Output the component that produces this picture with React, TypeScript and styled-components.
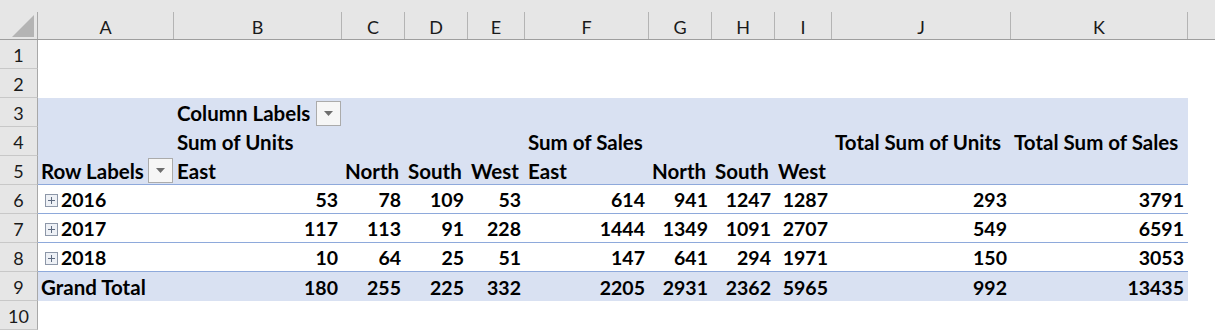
import React from "react";
import styled, { createGlobalStyle } from "styled-components";

const Global = createGlobalStyle`
  html, body { margin: 0; padding: 0; background: #ffffff; }
  body { font-family: Lato, "Open Sans", "Liberation Sans", sans-serif; overflow: hidden; }
`;

const COLS = "38px 136px 168px 63px 63px 57px 124px 63px 63px 57px 179px 177px 1fr";
const FILL = "#d9e1f2";
const LINE = "#8ea9db";

const Sheet = styled.div`
  width: 1215px;
  height: 330px;
  display: flex;
  flex-direction: column;
  overflow: hidden;
`;

const HeaderRow = styled.div`
  display: grid;
  grid-template-columns: ${COLS};
  height: 41px;
  box-sizing: border-box;
  background: #e6e6e6;
  border-bottom: 1px solid #9e9e9e;
`;

const Corner = styled.div`
  box-sizing: border-box;
  border-right: 1px solid #a8a8a8;
  margin-top: 12px;
  display: flex;
  align-items: flex-end;
  justify-content: flex-end;
  padding: 0 3px 2px 0;
`;

const ColHead = styled.div<{ $last?: boolean }>`
  box-sizing: border-box;
  margin-top: 12px;
  border-right: ${(p) => (p.$last ? "none" : "1px solid #b4b4b4")};
  display: flex;
  align-items: center;
  justify-content: center;
  font-size: 18px;
  color: #1a1a1a;
  padding-top: 2px;
`;

const Row = styled.div`
  display: grid;
  grid-template-columns: ${COLS};
  height: 29px;
  flex: none;
`;

const RowNum = styled.div`
  box-sizing: border-box;
  background: #e6e6e6;
  border-right: 1px solid #a8a8a8;
  border-bottom: 1px solid #c8c8c8;
  display: flex;
  align-items: center;
  justify-content: center;
  font-size: 18px;
  color: #1a1a1a;
  padding-top: 1px;
`;

const Cell = styled.div<{ $fill?: boolean; $line?: boolean; $right?: boolean }>`
  box-sizing: border-box;
  background: ${(p) => (p.$fill ? FILL : "#ffffff")};
  border-bottom: ${(p) => (p.$line ? `1px solid ${LINE}` : "none")};
  display: flex;
  align-items: center;
  justify-content: ${(p) => (p.$right ? "flex-end" : "space-between")};
  padding: 1px ${(p) => (p.$right ? "4px" : "1px")} 0 3px;
  font-size: ${(p) => (p.$right ? "19.5px" : "20.5px")};
  font-weight: 700;
  color: #000000;
  white-space: nowrap;
  overflow: visible;
  min-width: 0;
`;

const Label = styled.span`
  display: inline-flex;
  align-items: center;
  gap: 3px;
  font-size: 19.5px;
`;

const DropButton = styled.span`
  box-sizing: border-box;
  width: 25px;
  height: 25px;
  border: 1px solid #ababab;
  background: #f6f6f6;
  display: inline-flex;
  align-items: center;
  justify-content: center;
  flex: none;
`;

const Plus = styled.svg`
  flex: none;
  margin-left: 4px;
  margin-top: 1px;
`;

const Dropdown = () => (
  <DropButton>
    <svg width="9" height="5" viewBox="0 0 9 5">
      <path d="M0 0 H9 L4.5 5 Z" fill="#6e6e6e" />
    </svg>
  </DropButton>
);

const PlusBox = () => (
  <Plus width="13" height="13" viewBox="0 0 13 13">
    <rect x="0.5" y="0.5" width="12" height="12" fill="#eef1f6" stroke="#8d97a8" />
    <path d="M3 6.5 H10 M6.5 3 V10" stroke="#5f6b80" strokeWidth="1" />
  </Plus>
);

const CornerTriangle = () => (
  <svg width="22" height="22" viewBox="0 0 22 22">
    <path d="M22 0 V22 H0 Z" fill="#b4b4b4" />
  </svg>
);

const letters = ["A", "B", "C", "D", "E", "F", "G", "H", "I", "J", "K", ""];

type DataRow = {
  label: string;
  units: number[];
  sales: number[];
  tu: number;
  ts: number;
};

const data: DataRow[] = [
  { label: "2016", units: [53, 78, 109, 53], sales: [614, 941, 1247, 1287], tu: 293, ts: 3791 },
  { label: "2017", units: [117, 113, 91, 228], sales: [1444, 1349, 1091, 2707], tu: 549, ts: 6591 },
  { label: "2018", units: [10, 64, 25, 51], sales: [147, 641, 294, 1971], tu: 150, ts: 3053 },
];

const grand: DataRow = {
  label: "Grand Total",
  units: [180, 255, 225, 332],
  sales: [2205, 2931, 2362, 5965],
  tu: 992,
  ts: 13435,
};

const EmptyRow = ({ n }: { n: number }) => (
  <Row>
    <RowNum>{n}</RowNum>
    {Array.from({ length: 12 }).map((_, i) => (
      <Cell key={i} />
    ))}
  </Row>
);

const ValueCells = ({ r, fill, line }: { r: DataRow; fill?: boolean; line?: boolean }) => (
  <>
    {[...r.units, ...r.sales, r.tu, r.ts].map((v, i) => (
      <Cell key={i} $fill={fill} $line={line} $right>
        {v}
      </Cell>
    ))}
  </>
);

export default function App() {
  return (
    <>
      <Global />
      <Sheet>
        <HeaderRow>
          <Corner>
            <CornerTriangle />
          </Corner>
          {letters.map((l, i) => (
            <ColHead key={i} $last={i === letters.length - 1}>
              {l}
            </ColHead>
          ))}
        </HeaderRow>

        <EmptyRow n={1} />
        <EmptyRow n={2} />

        <Row>
          <RowNum>3</RowNum>
          <Cell $fill />
          <Cell $fill>
            <span>Column Labels</span>
            <Dropdown />
          </Cell>
          {Array.from({ length: 9 }).map((_, i) => (
            <Cell key={i} $fill />
          ))}
          <Cell />
        </Row>

        <Row>
          <RowNum>4</RowNum>
          <Cell $fill />
          <Cell $fill>Sum of Units</Cell>
          <Cell $fill />
          <Cell $fill />
          <Cell $fill />
          <Cell $fill>Sum of Sales</Cell>
          <Cell $fill />
          <Cell $fill />
          <Cell $fill />
          <Cell $fill>Total Sum of Units</Cell>
          <Cell $fill>Total Sum of Sales</Cell>
          <Cell />
        </Row>

        <Row>
          <RowNum>5</RowNum>
          <Cell $fill $line>
            <span>Row Labels</span>
            <Dropdown />
          </Cell>
          {["East", "North", "South", "West", "East", "North", "South", "West", "", ""].map((t, i) => (
            <Cell key={i} $fill $line>
              {t}
            </Cell>
          ))}
          <Cell />
        </Row>

        {data.map((r, idx) => (
          <Row key={r.label}>
            <RowNum>{6 + idx}</RowNum>
            <Cell $line>
              <Label>
                <PlusBox />
                {r.label}
              </Label>
            </Cell>
            <ValueCells r={r} line />
            <Cell />
          </Row>
        ))}

        <Row>
          <RowNum>9</RowNum>
          <Cell $fill>{grand.label}</Cell>
          <ValueCells r={grand} fill />
          <Cell />
        </Row>

        <EmptyRow n={10} />
      </Sheet>
    </>
  );
}
